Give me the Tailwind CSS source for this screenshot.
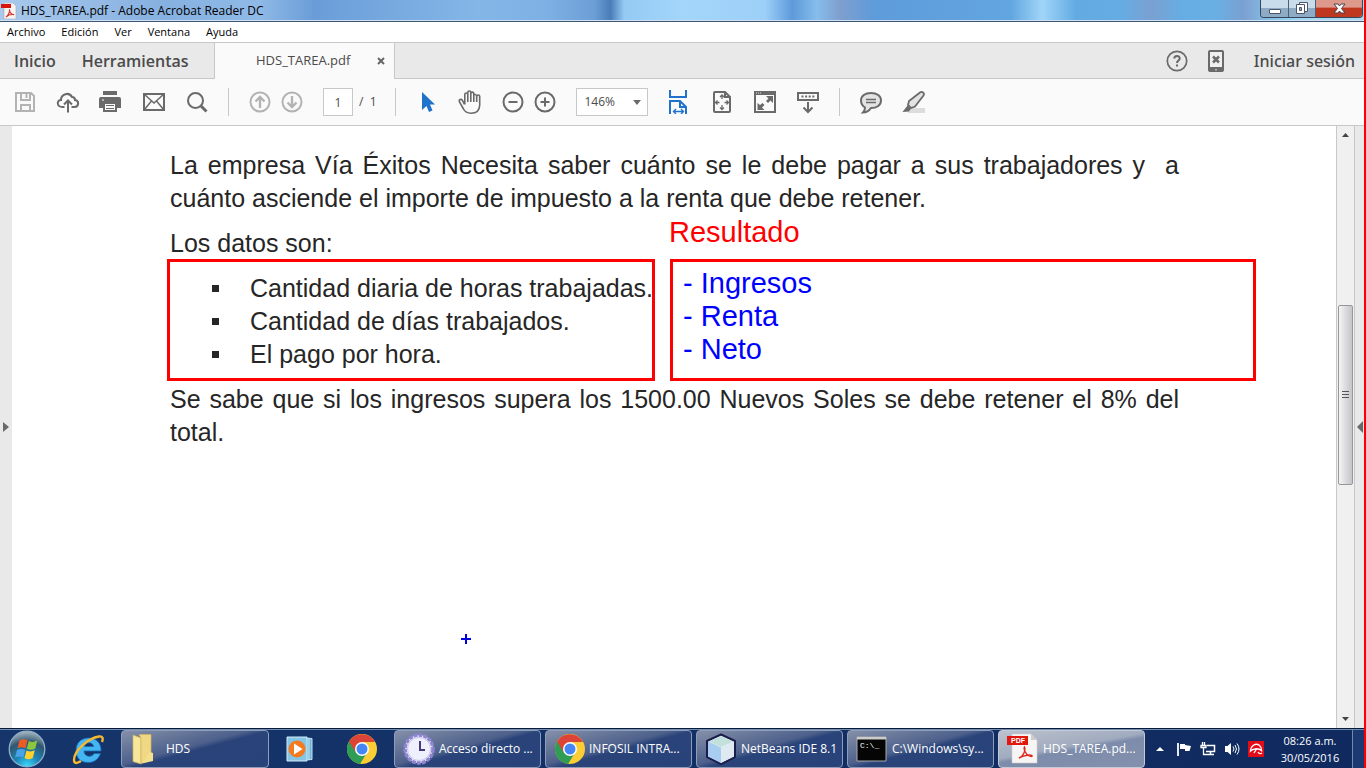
<!DOCTYPE html>
<html lang="es">
<head>
<meta charset="utf-8">
<title>HDS_TAREA.pdf - Adobe Acrobat Reader DC</title>
<script src="https://cdn.jsdelivr.net/npm/@tailwindcss/browser@4"></script>
</head>
<body class="relative flex h-screen flex-col overflow-hidden bg-white font-['Open_Sans','Noto_Sans',sans-serif] text-xs text-black">

<!-- Title bar -->
<header class="relative flex h-[22px] shrink-0 items-center border-b border-[#3f5670] bg-[linear-gradient(90deg,#a9c9ec_0%,#86b0e0_12%,#8fb9e6_19%,#6a9dd8_23%,#78aae0_29%,#84b6e8_35%,#7fb0e4_40%,#6c9fd6_43.5%,#4a7db8_44.7%,#94caf4_45.7%,#a4d6fa_50%,#9dd0f8_56%,#5e9adb_58%,#86bdec_59.8%,#7f9fce_61.5%,#5e9bdb_64%,#62a6e0_74%,#a0d5f8_76.3%,#62aae2_78.8%,#64ade3_82%,#7ba0d2_84.3%,#66ade3_86.5%,#69afe4_89%,#7ba0d2_91%,#8fcdf0_94%,#a9d8f0_96%)] pl-px shadow-[inset_0_-1px_0_#cfe2f4]">
  <svg class="h-4 w-4 shrink-0" viewBox="0 0 16 16"><path d="M3 0h9l3 3v13H3z" fill="#f6f3f2" stroke="#aaa" stroke-width=".6"/><path d="M0 1h10v4H0z" fill="#d9140c"/><path d="M5 14c2-1 4-5 3.600-7.500C8 9 11 12 13 11.500 10 11 7 12 5 14z" fill="none" stroke="#d6372c" stroke-width="1.200"/></svg>
  <span class="pl-1">HDS_TAREA.pdf - Adobe Acrobat Reader DC</span>
  <div class="absolute right-[3px] top-0 flex h-[18px] overflow-hidden rounded-b border border-t-0 border-[#33475e]">
    <button aria-label="Minimizar" class="flex w-7 items-center justify-center border-r border-[#4b6079] bg-linear-to-b from-[#c9dcec] from-50% to-[#8faac4] to-50%"><svg class="h-4 w-4" viewBox="0 0 16 16"><rect x="2.500" y="8.500" width="11" height="4" rx=".5" fill="#fff" stroke="#4b5669"/></svg></button>
    <button aria-label="Restaurar" class="flex w-[27px] items-center justify-center border-r border-[#4b6079] bg-linear-to-b from-[#c9dcec] from-50% to-[#8faac4] to-50%"><svg class="h-4 w-4" viewBox="0 0 16 16"><path d="M5.500 1.500h8v9h-8z" fill="#fff" stroke="#4b5669"/><path d="M2.500 3.500h8v9h-8z" fill="#fff" stroke="#4b5669"/><path d="M5.500 6.500h2v3h-2z" fill="#8faac4" stroke="#4b5669"/></svg></button>
    <button aria-label="Cerrar" class="flex w-[46px] items-center justify-center bg-linear-to-b from-[#dd9a8c] from-40% to-[#c0371f] to-50%"><svg class="h-4 w-4" viewBox="0 0 16 16"><path d="M3 3h4l1.500 2L10 3h4l-3.500 4.500L14 12h-4L8.500 10 7 12H3l3.500-4.500z" fill="#fff" stroke="#4b4050"/></svg></button>
  </div>
</header>

<!-- Menu -->
<nav class="flex h-5 shrink-0 items-center gap-4 bg-white pl-[7px] text-[11px]">
  <button>Archivo</button><button>Edición</button><button>Ver</button><button>Ventana</button><button>Ayuda</button>
</nav>

<!-- Tabs -->
<div class="flex h-[37px] shrink-0 border-t border-[#c8c8c8] bg-[#e9e9e9] text-base font-semibold text-[#4b4b4b]">
  <div class="flex w-[215px] items-center gap-[26px] border-r border-b border-[#c8c8c8] pl-[14px]">
    <button>Inicio</button><button>Herramientas</button>
  </div>
  <div class="flex w-[179px] items-center justify-between bg-[#fafafa] pl-[41px] pr-2 text-[13px] font-normal">
    <span>HDS_TAREA.pdf</span>
    <button aria-label="Cerrar pestaña"><svg class="h-[10px] w-[10px]" viewBox="0 0 10 10"><path d="M2 2l6 6M8 2L2 8" stroke="#666" stroke-width="2"/></svg></button>
  </div>
  <div class="flex flex-1 items-center justify-end border-b border-l border-[#c8c8c8] pr-[11px]">
    <button aria-label="Ayuda"><svg class="h-[22px] w-[22px]" viewBox="0 0 22 22" fill="none" stroke="#6a6a6a"><circle cx="11" cy="11" r="9.700" stroke-width="1.700"/><path d="M8.300 8.600c0-3.400 5.400-3.400 5.400-.2 0 2-2.700 2.100-2.700 4.500" stroke-width="2"/><path d="M11 14.500v2" stroke-width="2"/></svg></button>
    <button aria-label="Móvil" class="ml-5"><svg class="h-[22px] w-4" viewBox="0 0 16 22"><path d="M2 0h12q2 0 2 2v18q0 2-2 2H2q-2 0-2-2V2q0-2 2-2z" fill="#6a6a6a"/><path d="M2 2h12v15H2z" fill="#efefef"/><path d="M5 6.500l6 6m0-6l-6 6" stroke="#6a6a6a" stroke-width="2.500"/><path d="M7.500 19h1v1.500h-1z" fill="#fff"/></svg></button>
    <button class="ml-[30px] font-['Noto_Sans',sans-serif] font-medium">Iniciar sesión</button>
  </div>
</div>

<!-- Toolbar -->
<div class="flex h-[47px] shrink-0 items-center border-b border-[#c8c8c8] bg-[#fafafa] pl-[13px] text-[#4b4b4b]">
  <div class="flex items-center gap-[19px]">
    <button aria-label="Guardar"><svg class="h-6 w-6" viewBox="0 0 24 24" fill="none" stroke="#b3b3b3" stroke-width="2"><path d="M3 3h15l3 3v15H3zM8 3v7h9V3M8 21v-6h9v6"/><path d="M13.500 4v4"/></svg></button>
    <button aria-label="Compartir"><svg class="h-6 w-6" viewBox="0 0 24 24" fill="none" stroke="#6a6a6a" stroke-width="2"><path d="M8.500 17H6.500C.500 17 .500 10 5 10c0-6 8-8.500 11-3 2.500 0 3 1.500 3 3 4.500.5 4 7-.500 7h-3M12 22.500V11M8 14.500l4-4 4 4"/></svg></button>
    <button aria-label="Imprimir"><svg class="h-6 w-6" viewBox="0 0 24 24"><path d="M4 1h14v4H4zM2 7h18q2 0 2 2v9h-4v4H4v-4H0V9q0-2 2-2z" fill="#6a6a6a"/><path d="M6 14h10v6H6z" fill="#fafafa"/><path d="M7 15.500h8M7 18.500h8" stroke="#6a6a6a"/><path d="M3 10h2" stroke="#fafafa"/></svg></button>
    <button aria-label="Correo"><svg class="h-6 w-6" viewBox="0 0 24 24" fill="none" stroke="#6a6a6a"><path d="M2 4h20v16H2z" stroke-width="2"/><path d="M2 4l10 9L22 4M2 20l7.500-9M22 20l-7.500-9" stroke-width="1.500"/></svg></button>
    <button aria-label="Buscar"><svg class="h-6 w-6" viewBox="0 0 24 24" fill="none" stroke="#6a6a6a"><circle cx="10.500" cy="10.500" r="7.500" stroke-width="2"/><path d="M16 16l5.500 5.500" stroke-width="3"/></svg></button>
  </div>
  <div class="ml-[19px] h-7 w-px bg-[#c8c8c8]"></div>
  <button aria-label="Página anterior" class="ml-[19px]"><svg class="h-6 w-6" viewBox="0 0 24 24" fill="none" stroke="#b3b3b3" stroke-width="2"><circle cx="12" cy="12" r="9.500"/><path d="M12 18V7M7.500 11.500L12 7l4.500 4.500" stroke-width="2.400"/></svg></button>
  <button aria-label="Página siguiente" class="ml-2"><svg class="h-6 w-6" viewBox="0 0 24 24" fill="none" stroke="#b3b3b3" stroke-width="2"><circle cx="12" cy="12" r="9.500"/><path d="M12 6v11M7.500 12.500L12 17l4.500-4.500" stroke-width="2.400"/></svg></button>
  <input aria-label="Página" value="1" class="ml-[19px] h-7 w-[30px] border border-[#c8c8c8] bg-white text-center text-xs">
  <span class="ml-[6px]">/&nbsp; 1</span>
  <div class="ml-[18px] h-7 w-px bg-[#c8c8c8]"></div>
  <button aria-label="Selección" class="ml-5"><svg class="h-6 w-6" viewBox="0 0 24 24"><path d="M6 2v18l4.500-4 2.500 6 3.500-1.500-2.500-6h5z" fill="#1f73cc"/></svg></button>
  <button aria-label="Mano" class="ml-[18px]"><svg class="h-6 w-6" viewBox="0 0 24 24" fill="none" stroke="#6a6a6a" stroke-width="1.600"><path d="M6.500 14.500L4.500 10.500C3 8.500.500 9.500 1.500 12l4 7c1.500 3 4 4.200 7.500 4.200 5 0 8.500-2.500 8.700-8V6.500c0-2-3-2-3 0V12M6.800 14.500V4.500c0-2 3-2 3 0V12M9.800 12V2.500c0-2 3-2 3 0V12M12.800 4c0-2.500 3-2.500 3 0v8M15.800 5.500c0-1.500 2.900-1.500 2.900 1"/></svg></button>
  <button aria-label="Alejar" class="ml-[19px]"><svg class="h-6 w-6" viewBox="0 0 24 24" fill="none" stroke="#6a6a6a" stroke-width="2"><circle cx="12" cy="12" r="9.500"/><path d="M7.500 12h9"/></svg></button>
  <button aria-label="Acercar" class="ml-2"><svg class="h-6 w-6" viewBox="0 0 24 24" fill="none" stroke="#6a6a6a" stroke-width="2"><circle cx="12" cy="12" r="9.500"/><path d="M7.500 12h9M12 7.500v9"/></svg></button>
  <div class="relative ml-[19px] h-7 w-[72px]">
    <select aria-label="Zoom" class="h-full w-full appearance-none border border-[#c8c8c8] bg-white pl-2 text-xs"><option>146%</option></select>
    <svg class="pointer-events-none absolute right-[7px] top-[12px] h-[5px] w-[8px]" viewBox="0 0 8 5"><path d="M0 0h8L4 5z" fill="#6a6a6a"/></svg>
  </div>
  <button aria-label="Ajustar al ancho" class="ml-[18px]"><svg class="h-6 w-6" viewBox="0 0 24 24" fill="none" stroke="#1f73cc" stroke-width="2"><path d="M4 0v7h16V0"/><path d="M4 24V11h10l6 6v7M14 11v6h6"/><path d="M8 21.500h9M10 19l-2.500 2.500L10 24M15 19l2.500 2.500L15 24" stroke-width="1.400"/></svg></button>
  <button aria-label="Ajustar página" class="ml-5"><svg class="h-6 w-6" viewBox="0 0 24 24" fill="none" stroke="#6a6a6a"><path d="M4 3q0-1 1-1h10l5 5v14q0 1-1 1H5q-1 0-1-1zM15 2v5h5" stroke-width="2"/><path d="M12 5v4M12 15v4M5.500 12.500h4M14.500 12.500h4M10 7l2-2 2 2M10 17.500l2 2 2-2M7.500 10.500l-2 2 2 2M16.500 10.500l2 2-2 2" stroke-width="1.300"/></svg></button>
  <button aria-label="Pantalla completa" class="ml-[19px]"><svg class="h-6 w-6" viewBox="0 0 24 24"><path d="M1 1h22v22H1z" fill="#6a6a6a"/><path d="M3 5h18v16H3z" fill="#fafafa"/><path d="M13 6h7v7l-2.500-2.500-2.500 2.500-2-2 2.500-2.500zM4.500 13l2.500 2 2.500-2 2 2L9 17.500l2.500 2.500h-7z" fill="#6a6a6a"/><path d="M3 3h6" stroke="#ddd" stroke-dasharray="1 1"/></svg></button>
  <button aria-label="Modo de lectura" class="ml-[19px]"><svg class="h-6 w-6" viewBox="0 0 24 24" fill="none" stroke="#6a6a6a" stroke-width="2"><path d="M2 3h20v7H2z"/><path d="M5.500 6.500h13" stroke-dasharray="2 1.600"/><path d="M12 12v10M7.500 17.500L12 22l4.500-4.500"/></svg></button>
  <div class="ml-[19px] h-7 w-px bg-[#c8c8c8]"></div>
  <button aria-label="Comentario" class="ml-[19px]"><svg class="h-6 w-6" viewBox="0 0 24 24" stroke="#6a6a6a"><path d="M12 3c6 0 10 3 10 7.500S18 18 12 18c-2 3-5 4.500-8 4.500 1.500-1.500 2-3 2-5C3.500 16 2 13.500 2 10.500 2 6 6 3 12 3z" fill="#e3e3e3" stroke-width="2"/><path d="M7 9.500h10M7 12.500h10" stroke-width="1.300"/></svg></button>
  <button aria-label="Resaltar" class="ml-[19px]"><svg class="h-6 w-6" viewBox="0 0 24 24"><path d="M8 18h15v5H6z" fill="#dcdcdc"/><path d="M18 2.500c2-1.500 5 .5 3.500 3L13 16.500 9 18l-3-3 1-4z" fill="#e3e3e3" stroke="#6a6a6a" stroke-width="1.800"/><path d="M5.500 15.500L9 18.500l-2 3-6.500.5z" fill="#6a6a6a"/></svg></button>
</div>

<!-- Document viewer -->
<div class="flex min-h-0 flex-1 bg-[#e9e9e9]">
  <button aria-label="Mostrar panel izquierdo" class="flex w-3 items-center justify-center"><svg class="h-3 w-[6px]" viewBox="0 0 6 12"><path d="M0 1l6 5-6 5z" fill="#6a6a6a"/></svg></button>
  <main class="relative flex-1 bg-white pt-[23px] pl-[158px] font-['Liberation_Sans',Arial,sans-serif] text-[25px] leading-[33px] text-[#262626]">
    <div class="flex max-w-[1009px] flex-col gap-3">
      <p class="text-justify">La empresa Vía Éxitos Necesita saber cuánto se le debe pagar a sus trabajadores y&nbsp; a cuánto asciende el importe de impuesto a la renta que debe retener.</p>
      <p>Los datos son:</p>
      <ul class="pl-[42px]">
        <li class="flex items-center gap-[31px]"><span class="h-[7px] w-[7px] bg-[#262626]"></span>Cantidad diaria de horas trabajadas.</li>
        <li class="flex items-center gap-[31px]"><span class="h-[7px] w-[7px] bg-[#262626]"></span>Cantidad de días trabajados.</li>
        <li class="flex items-center gap-[31px]"><span class="h-[7px] w-[7px] bg-[#262626]"></span>El pago por hora.</li>
      </ul>
      <p class="text-justify">Se sabe que si los ingresos supera los 1500.00 Nuevos Soles se debe retener el 8% del total.</p>
    </div>
    <!-- Annotations drawn over the page -->
    <div class="absolute left-[155px] top-[133px] h-[122px] w-[488px] border-3 border-[#ff0000]"></div>
    <p class="absolute left-[657px] top-[90px] text-[29px] text-[#ff0000]">Resultado</p>
    <div class="absolute left-[658px] top-[133px] h-[122px] w-[586px] border-3 border-[#ff0000] px-[10px] pt-[5px] text-[29px] text-[#0000ff]">
      <p>- Ingresos</p><p>- Renta</p><p>- Neto</p>
    </div>
    <svg class="absolute left-[449px] top-[508px] h-[10px] w-[10px]" viewBox="0 0 10 10"><path d="M0 5h10M5 0v10" stroke="#0000e0" stroke-width="2"/></svg>
  </main>
  <div class="relative flex w-[19px] flex-col items-center justify-between border-x border-[#c8c8c8] bg-[#f0f0f0] py-[7px]">
    <svg class="h-1 w-[7px]" viewBox="0 0 7 4"><path d="M0 4h7L3.500 0z" fill="#444"/></svg>
    <div class="absolute top-[179px] flex h-[180px] w-[15px] items-center justify-center rounded-xs border border-[#979797] bg-linear-to-r from-[#f4f4f4] via-[#dcdcdf] to-[#c4c5ca]"><svg class="h-2 w-[7px]" viewBox="0 0 7 8"><path d="M0 .500h7M0 3.500h7M0 6.500h7" stroke="#555"/></svg></div>
    <svg class="h-1 w-[7px]" viewBox="0 0 7 4"><path d="M0 0h7L3.500 4z" fill="#444"/></svg>
  </div>
  <button aria-label="Mostrar panel derecho" class="flex w-[11px] items-center justify-center pr-[2px]"><svg class="h-3 w-[6px]" viewBox="0 0 6 12"><path d="M6 0v12L0 6z" fill="#6a6a6a"/></svg></button>
</div>

<!-- Taskbar -->
<footer class="flex h-10 shrink-0 items-center border-t border-[#0a1a38] bg-[#122f66] bg-linear-to-r from-[#15356b] to-[#102a5f] pl-2 text-white shadow-[inset_0_1px_0_#6f8fb5]">
  <button aria-label="Inicio"><svg class="h-[38px] w-[38px]" viewBox="0 0 38 38"><defs><radialGradient id="orb" cx=".5" cy="1" r="1"><stop offset="0" stop-color="#3fe0ff"/><stop offset=".35" stop-color="#1c86b8"/><stop offset=".7" stop-color="#31566f"/><stop offset="1" stop-color="#a9b9c4"/></radialGradient></defs><circle cx="19" cy="19" r="17.800" fill="url(#orb)" stroke="#8fb0c8" stroke-width="1.300"/><path d="M11.500 10.500c3-2 5.500-1.500 8-.3l-2 8c-3-1.300-5-1.400-8 0z" fill="#ee5a24"/><path d="M20.800 11c3 1.300 5.500 1.200 8.500-.5l-2 8c-3 1.500-5.500 1.500-8.500.3z" fill="#8cc63f"/><path d="M9 20c3-1.500 5.300-1.300 8.200 0l-2 7.500c-3-1.400-5.500-1.400-8.200.3z" fill="#4aa3e8"/><path d="M18.500 20.500c3 1.200 5.500 1.200 8.300-.2l-2 7.700c-3 1.600-5.500 1.600-8.300 0z" fill="#ffd02e"/></svg></button>
  <button aria-label="Internet Explorer" class="ml-[26px]"><svg class="h-8 w-8" viewBox="0 0 32 32"><path d="M29 18H12c0 6 8 7 10 2.500h6.500C26 28 20 29.500 16 29.500c-8 0-12-5-12-12C4 10 9 5 16.500 5 25 5 29.500 11 29 18zM12.500 13.500h9c-.5-5-8.500-5-9 0z" fill="#45b5f2" stroke="#1767b5" stroke-width=".8" fill-rule="evenodd"/><path d="M30 9c1.500-4 .5-6-3-5.500C16 5 2 18 2 27c0 4 3 3.500 7 1" fill="none" stroke="#f5b82e" stroke-width="2.400"/></svg></button>
  <button class="ml-[17px] flex h-[38px] w-[148px] items-center rounded-sm border border-[#8f9db8] bg-[linear-gradient(165deg,#8590a9_0%,#4d608b_45%,#2a447a_52%,#28437a_100%)] pl-2 text-left">
    <svg class="h-8 w-7" viewBox="0 0 28 32"><path d="M3 2l8 3v26l-8-2.500z" fill="#f8e79b" stroke="#cdb45c" stroke-width=".7"/><path d="M9 1.500h12v25l-10 4V5z" fill="#efd783" stroke="#cdb45c" stroke-width=".7"/><path d="M20 19l3 1v8l-11 2.500z" fill="#f4df8e"/></svg>
    <span class="pl-2">HDS</span>
  </button>
  <button aria-label="Reproductor multimedia" class="ml-[17px]"><svg class="h-7 w-7" viewBox="0 0 28 28"><path d="M20 3l6 .5v21l-6 .5z" fill="#72b3d7" stroke="#bfe3f5"/><path d="M1 2h20v24H1z" fill="#85c5e5" stroke="#d3edf9"/><path d="M23 3v22" stroke="#c5e8f8"/><circle cx="11" cy="14" r="8.500" fill="#f47b20"/><path d="M8 8.500v11l8.500-5.500z" fill="#fff"/></svg></button>
  <button aria-label="Chrome" class="ml-[33px]"><svg class="h-[30px] w-[30px]" viewBox="0 0 30 30"><circle cx="15" cy="15" r="15" fill="#fccd34"/><path d="M15 15L2 7.500A15 15 0 0 0 13 30l7.500-12z" fill="#2f9e54"/><path d="M15 8h13A15 15 0 0 0 2 7.500L8.500 18z" fill="#db4437"/><circle cx="15" cy="15" r="7" fill="#fff"/><circle cx="15" cy="15" r="5.500" fill="#4487f4"/></svg></button>
  <div class="ml-[17px] flex gap-1">
    <button class="flex h-[38px] w-[147px] items-center rounded-sm border border-[#8f9db8] bg-[linear-gradient(165deg,#8590a9_0%,#4d608b_45%,#2a447a_52%,#28437a_100%)] pl-2 text-left"><svg class="h-8 w-8 shrink-0" viewBox="0 0 32 32"><circle cx="16" cy="16" r="14" fill="#ece9fb" stroke="#8d85cf" stroke-width="3.500" stroke-dasharray="4 1"/><circle cx="16" cy="16" r="11.500" fill="#eef1fd" stroke="#c9c6ee"/><path d="M17 8v9h5" fill="none" stroke="#453a80" stroke-width="2"/></svg><span class="pl-1">Acceso directo ...</span></button>
    <button class="flex h-[38px] w-[147px] items-center rounded-sm border border-[#8f9db8] bg-[linear-gradient(165deg,#8590a9_0%,#4d608b_45%,#2a447a_52%,#28437a_100%)] pl-[9px] text-left"><svg class="h-[30px] w-[30px] shrink-0" viewBox="0 0 30 30"><circle cx="15" cy="15" r="15" fill="#fccd34"/><path d="M15 15L2 7.500A15 15 0 0 0 13 30l7.500-12z" fill="#2f9e54"/><path d="M15 8h13A15 15 0 0 0 2 7.500L8.500 18z" fill="#db4437"/><circle cx="15" cy="15" r="7" fill="#fff"/><circle cx="15" cy="15" r="5.500" fill="#4487f4"/></svg><span class="pl-1">INFOSIL INTRA...</span></button>
    <button class="flex h-[38px] w-[147px] items-center rounded-sm border border-[#8f9db8] bg-[linear-gradient(165deg,#8590a9_0%,#4d608b_45%,#2a447a_52%,#28437a_100%)] pl-2 text-left"><svg class="h-8 w-8 shrink-0" viewBox="0 0 32 32" stroke-linejoin="round"><path d="M16 1.500L30 8v16l-14 7L2 24V8z" fill="#e8f2fb" stroke="#1a1c4b" stroke-width="2"/><path d="M3 8.500l13 6V30L3 23.500z" fill="#a8cdf0"/><path d="M29 8.500l-13 6V30l13-6.500z" fill="#dfe9f1"/><path d="M16 3l12.500 5.500L16 14 3.500 8.500z" fill="#c3e0dc"/></svg><span class="pl-1">NetBeans IDE 8.1</span></button>
    <button class="flex h-[38px] w-[147px] items-center rounded-sm border border-[#8f9db8] bg-[linear-gradient(165deg,#8590a9_0%,#4d608b_45%,#2a447a_52%,#28437a_100%)] pl-2 text-left"><svg class="h-8 w-8 shrink-0" viewBox="0 0 32 32"><path d="M1 4h29v24H1z" fill="#050505" stroke="#aaa"/><path d="M1 4h29v2.500H1z" fill="#ccc"/><text x="4" y="15" font-family="Liberation Mono" font-size="8" fill="#fff">C:\_</text></svg><span class="pl-1">C:\Windows\sy...</span></button>
    <button class="flex h-[38px] w-[147px] items-center rounded-sm border border-[#c3cad6] bg-[linear-gradient(170deg,#bcc2cd_0%,#a1abbf_45%,#7d8cab_52%,#8491ad_100%)] pl-2 text-left"><svg class="h-8 w-8 shrink-0" viewBox="0 0 32 32"><path d="M5 1h19l6 6v23H5z" fill="#f7f5f4" stroke="#ccc" stroke-width=".6"/><path d="M24 1v6h6z" fill="#ccc"/><path d="M0 3h21v9H0z" fill="#e1170e"/><text x="4" y="10" font-family="Liberation Sans" font-weight="700" font-size="7" fill="#fff">PDF</text><path d="M12 25c4-1 7-8 5.500-11-1.500 2 2 9.500 7 9.500 2 0 0-2-3-1.500-4 .5-7 1.500-9.500 3z" fill="none" stroke="#e2231a" stroke-width="1.300"/></svg><span class="pl-1">HDS_TAREA.pd...</span></button>
  </div>
  <div class="ml-auto flex items-center">
    <button aria-label="Mostrar iconos ocultos"><svg class="h-1 w-2" viewBox="0 0 8 4"><path d="M0 4h8L4 0z" fill="#fff"/></svg></button>
    <svg class="ml-3 h-4 w-4" viewBox="0 0 16 16"><path d="M2 2v13" stroke="#fff" stroke-width="1.800"/><path d="M4 3h5v1l6 1-1.500 5L9 10V8H4z" fill="#fff"/></svg>
    <svg class="ml-2 h-4 w-4" viewBox="0 0 16 16" fill="none" stroke="#fff"><path d="M2.500 1v3M4.500 1v3M1 4.500h5v2H1zM3.500 7v6.500H7" stroke-width="1.300"/><path d="M7 4.500h7.500v6H6" stroke-width="1.500"/><path d="M7 13.500h7M10.500 11v2" stroke-width="1.500"/></svg>
    <svg class="ml-2 h-4 w-4" viewBox="0 0 16 16"><path d="M1 5h2.500L7 2v12l-3.500-3H1z" fill="#fff"/><path d="M9 5.500q2 2.500 0 5M11 4q3 4 0 8M13 2.500q4 5.500 0 11" fill="none" stroke="#fff"/></svg>
    <svg class="ml-2 h-4 w-4" viewBox="0 0 16 16"><path d="M0 0h16v16H0z" fill="#e30b17"/><path d="M2.500 10C3 4 8 2 11 4c2 1.500 2.500 3 2.500 5.500C11 7 6 7 2.500 10zM8.500 8L6 12M10 11c1 2 2.500 2 4 1" fill="none" stroke="#fff" stroke-width="1.400"/></svg>
    <div class="w-[88px] pl-1 text-center text-[11px] leading-[17px]"><p>08:26 a.m.</p><p>30/05/2016</p></div>
    <button aria-label="Mostrar escritorio" class="h-[38px] w-[14px] border-l border-[#7388ae] bg-[#1b3a72]"></button>
  </div>
</footer>

<div class="pointer-events-none absolute inset-y-0 right-0 w-[2px] bg-[#ff0000]"></div>
</body>
</html>
